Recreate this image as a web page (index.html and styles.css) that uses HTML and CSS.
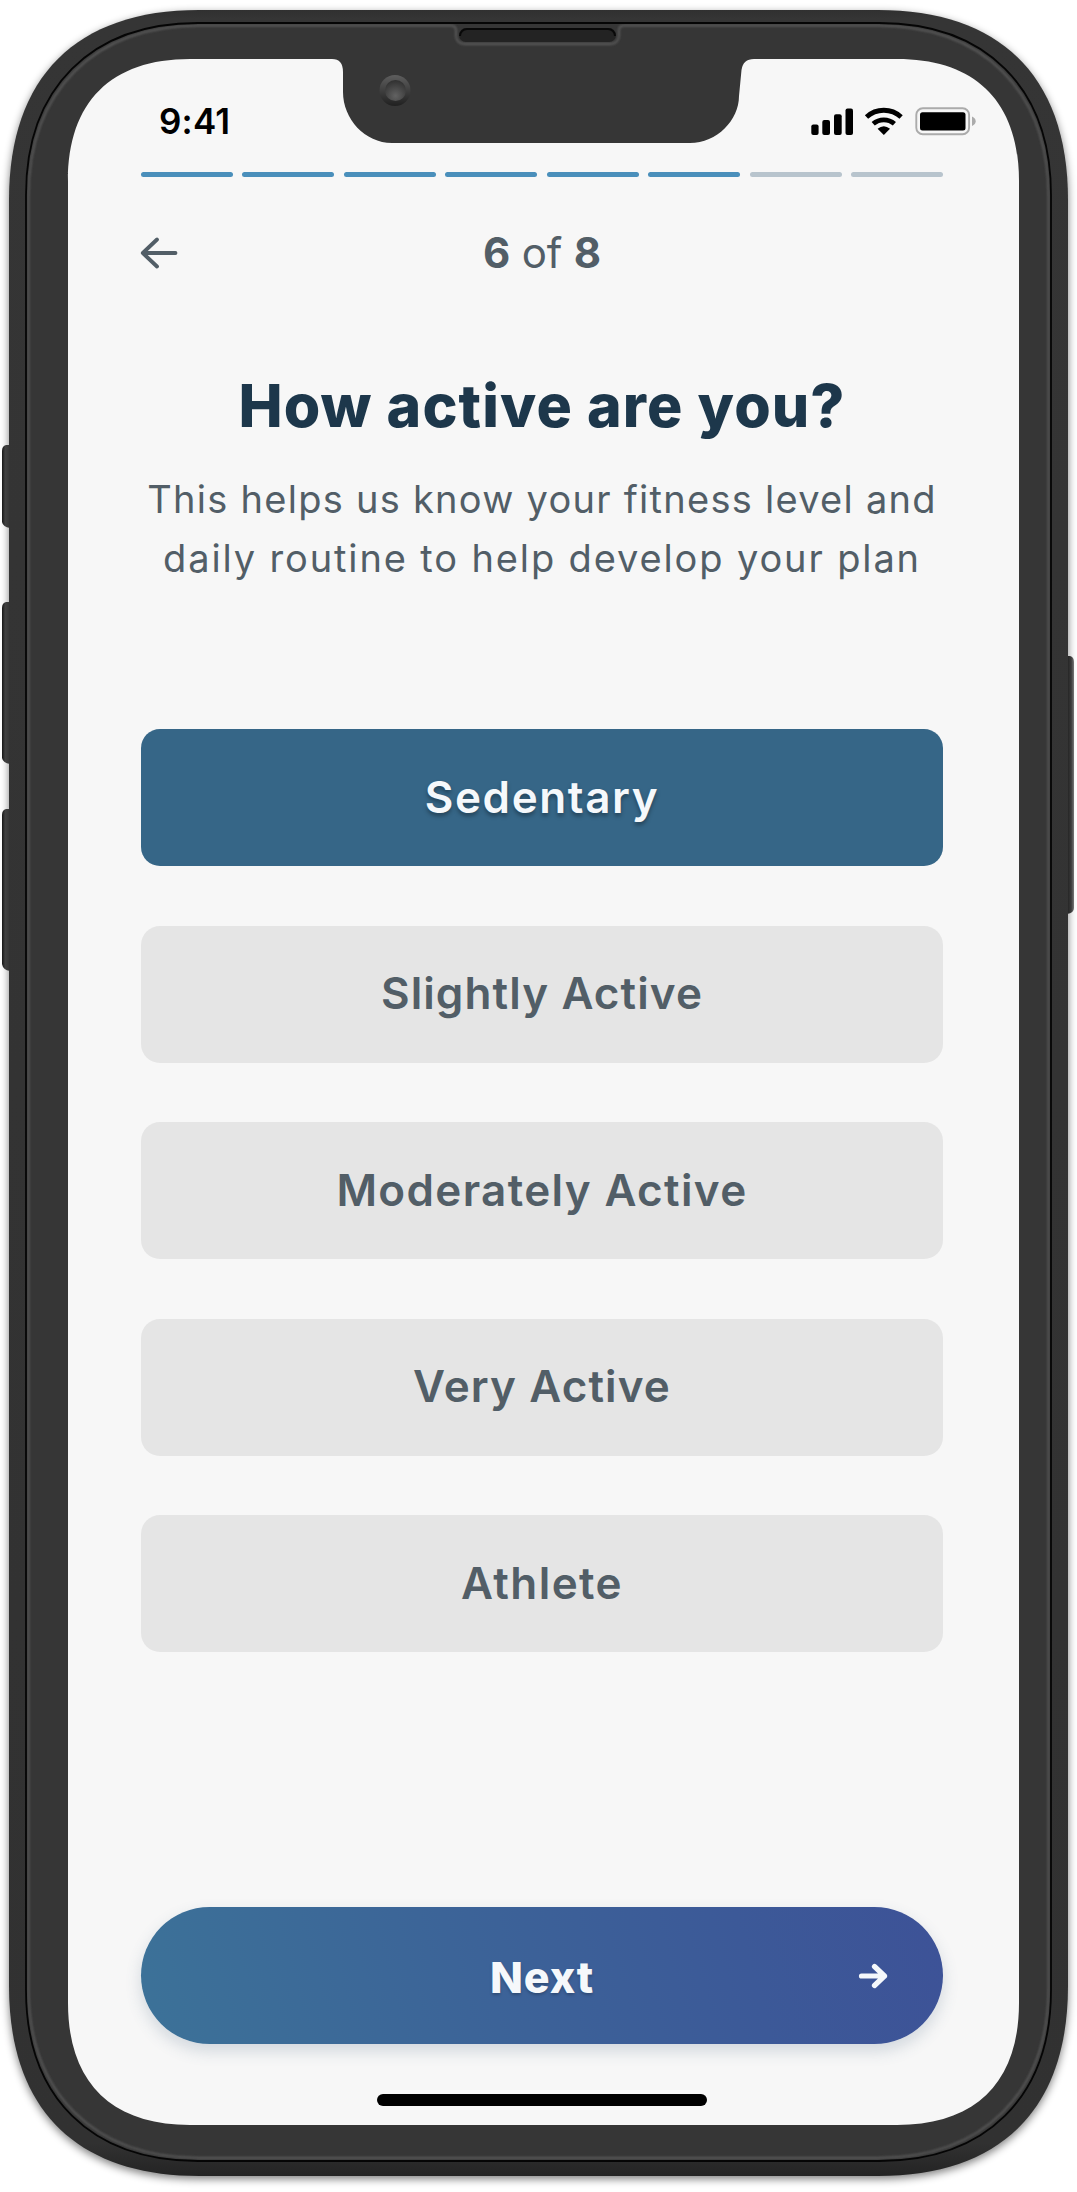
FILE: index.html
```html
<!DOCTYPE html>
<html lang="en">
<head>
<meta charset="utf-8">
<title>How active are you?</title>
<link rel="stylesheet" href="styles.css">
</head>
<body>
<div class="device">
  <svg class="frame" viewBox="0 0 1077 2192" width="1077" height="2192" aria-hidden="true">
    <defs>
      <linearGradient id="rim" x1="0" y1="0" x2="0" y2="1">
        <stop offset="0" stop-color="#303030"/><stop offset=".004" stop-color="#353535"/>
        <stop offset=".985" stop-color="#313131"/><stop offset="1" stop-color="#242424"/>
      </linearGradient>
      <linearGradient id="keyLeft"><stop offset="0" stop-color="#161616"/><stop offset=".4" stop-color="#414141"/><stop offset="1" stop-color="#343434"/></linearGradient>
      <linearGradient id="keyRight"><stop offset="0" stop-color="#1f1f1f"/><stop offset=".6" stop-color="#3b3b3b"/><stop offset="1" stop-color="#777"/></linearGradient>
      <linearGradient id="lensRing" x1="0" y1="0" x2="0" y2="1"><stop offset="0" stop-color="#5e5e5e"/><stop offset="1" stop-color="#202020"/></linearGradient>
      <radialGradient id="lens" cx=".5" cy=".75" r=".75"><stop offset="0" stop-color="#626262"/><stop offset="1" stop-color="#303030"/></radialGradient>
      <filter id="shade" x="-5%" y="-5%" width="110%" height="110%"><feGaussianBlur stdDeviation="4"/></filter>
      <filter id="soft"><feGaussianBlur stdDeviation=".9"/></filter>
      <path id="body" d="M199 10H878C1001 10 1068 77 1068 200V1986C1068 2109 1001 2176 878 2176H199C76 2176 9 2109 9 1986V200C9 77 76 10 199 10Z"/>
      <path id="ring" d="M198 23H879C986 23 1051 88 1051 195V1990C1051 2097 986 2161 879 2161H198C91 2161 26 2097 26 1990V195C26 88 91 23 198 23Z"/>
    </defs>
    <use href="#body" fill="#000" opacity=".5" transform="translate(0 3)" filter="url(#shade)"/>
    <g fill="url(#keyLeft)">
      <path d="M10 445H6Q2 446 2 451V522Q3 527 10 528Z"/>
      <path d="M10 602H6Q2 603 2 608V758Q3 763 10 764Z"/>
      <path d="M10 809H6Q2 810 2 815V964Q3 970 10 971Z"/>
    </g>
    <path d="M1067 656H1070Q1074 657 1074 662V908Q1074 913 1067 914Z" fill="url(#keyRight)"/>
    <use href="#body" fill="url(#rim)"/>
    <use href="#ring" fill="#363636"/>
    <path d="M200 25.500H451Q456 25.500 456 31V35Q456 44 465 44H610Q619 44 619 35V31Q619 25.500 624 25.500H877C983 25.500 1048.500 91 1048.500 197V1988C1048.500 2093 983 2158 877 2158H200C94 2158 28.500 2093 28.500 1988V197C28.500 91 94 25.500 200 25.500Z" fill="none" stroke="#5c5c5c" stroke-width="1.800" filter="url(#soft)"/>
    <use href="#ring" fill="none" stroke="#050505" stroke-width="1.800"/>
    <rect x="459" y="28" width="157" height="14" rx="7" fill="#232323"/>
    <path d="M460 36A7 7 0 0 1 467 29H608A7 7 0 0 1 615 36" fill="none" stroke="#080808" stroke-width="2"/>
    <circle cx="395" cy="90.500" r="15.500" fill="url(#lensRing)"/>
    <circle cx="395.500" cy="90.500" r="10.500" fill="url(#lens)"/>
    <path d="M190 59H332Q343 59 343 72V92C343 119 365 143 392 143H690C717 143 739 120 739 96L741.500 70Q743 59 754 59H897C976 59 1019 102 1019 181V2003C1019 2082 976 2125 897 2125H190C111 2125 68 2082 68 2003V181C68 102 111 59 190 59Z" fill="#f7f7f7"/>
  </svg>

  <main class="screen">
    <div class="status">
      <span class="clock">9:41</span>
      <svg class="status-icons" viewBox="0 0 166 30" width="166" height="30" aria-hidden="true">
        <rect x="1.300" y="18.500" width="7.300" height="10.500" rx="2"/>
        <rect x="12.300" y="14" width="7.700" height="15" rx="2"/>
        <rect x="24" y="8.200" width="7.700" height="20.800" rx="2"/>
        <rect x="35.500" y="2.500" width="7.500" height="26.500" rx="2"/>
        <g fill="none" stroke="#000" stroke-width="4.800">
          <path d="M56.500 11A25.500 25.500 0 0 1 91.100 11"/>
          <path d="M63.200 17.800A16.200 16.200 0 0 1 84.400 17.800"/>
        </g>
        <path d="M73.800 29L67.600 22.800Q73.800 17.800 80 22.800Z"/>
        <rect x="106.300" y="2.300" width="52.800" height="25.900" rx="6.500" fill="none" stroke="#ababab" stroke-width="1.900"/>
        <rect x="110" y="6.200" width="45.500" height="18.300" rx="2.500"/>
        <path d="M162 10.500Q165.700 12.200 165.700 15.200T162 20Z" fill="#ababab"/>
      </svg>
    </div>

    <div class="content">
      <div class="progress">
        <i class="step done"></i><i class="step done"></i><i class="step done"></i><i class="step done"></i>
        <i class="step done"></i><i class="step done"></i><i class="step"></i><i class="step"></i>
      </div>
      <header class="nav">
        <svg class="back" viewBox="0 0 38 34" width="38" height="34" aria-label="Back"><path d="M34.500 17H1.800M16 3.500L1.800 17L16 30.500"/></svg>
        <span class="count"><b>6</b> of <b>8</b></span>
      </header>
      <h1 class="title">How active are you?</h1>
      <p class="lead"><span class="line first">This helps us know your fitness level and</span><span class="line second">daily routine to help develop your plan</span></p>
      <div class="options">
        <button class="option selected">Sedentary</button>
        <button class="option">Slightly Active</button>
        <button class="option moderate">Moderately Active</button>
        <button class="option">Very Active</button>
        <button class="option athlete">Athlete</button>
      </div>
      <button class="next">
        <span class="next-label">Next</span>
        <svg class="next-arrow" viewBox="0 0 30 26" width="30" height="26" aria-hidden="true"><path d="M3.500 13H26.500M16.500 3.500L26.500 13L16.500 22.500"/></svg>
      </button>
      <div class="home"></div>
    </div>
  </main>
</div>
</body>
</html>
```
FILE: styles.css
```css
* { box-sizing: border-box; }
body { margin: 0; background: #fff; font-family: Inter, "Open Sans", sans-serif; }
button { border: 0; padding: 0; font-family: inherit; }

.device { position: relative; width: 1077px; height: 2192px; padding: 59px 58px 67px 68px; overflow: hidden; }
.frame { position: absolute; left: 0; top: 0; }
.screen { position: relative; display: flex; flex-direction: column; height: 2066px; }

.status { display: flex; justify-content: space-between; align-items: center; height: 113px; padding: 11px 43px 0 91px; }
.clock { font-size: 35px; font-weight: 600; line-height: 40px; letter-spacing: .2px; }

.content { display: flex; flex-direction: column; width: 802px; margin-left: 73px; }
.progress { display: flex; gap: 9.5px; height: 5px; }
.step { flex: 1; border-radius: 2.5px; background: #b8c4cd; }
.step.done { background: #4a8fbb; }

.nav { display: grid; grid-template-columns: 38px 1fr 38px; align-items: center; height: 60px; margin-top: 46px; }
.back { fill: none; stroke: #525e67; stroke-width: 3.8; stroke-linecap: round; stroke-linejoin: round; overflow: visible; }
.count { font-size: 42px; line-height: 60px; text-align: center; color: #525e67; letter-spacing: -.2px; }
.count b { font-weight: 700; }

.title { margin: 83px 0 0; font-size: 59px; font-weight: 800; line-height: 80px; letter-spacing: 1.1px; text-align: center; color: #1d374b; white-space: nowrap; }
.lead { display: flex; flex-direction: column; align-items: center; margin: 24px 0 0; font-size: 38px; line-height: 59px; color: #525e67; white-space: nowrap; }
.first { letter-spacing: 1.27px; }
.second { letter-spacing: 1.87px; }

.options { display: flex; flex-direction: column; gap: 59.5px; margin-top: 141px; }
.option { height: 137px; padding-bottom: 2px; border-radius: 19px; background: #e5e5e5; color: #525e67; font-size: 44px; font-weight: 600; letter-spacing: 1.1px; }
.option.moderate { letter-spacing: 1.35px; }
.option.athlete { letter-spacing: 1.4px; }
.option.selected { background: #366687; color: #f5f8fb; letter-spacing: 1.6px; text-shadow: 0 3px 4px rgba(0, 0, 0, .35); }

.next { display: grid; grid-template-columns: 1fr auto 1fr; align-items: center; height: 137px; margin-top: 255px; border-radius: 68.5px; background: linear-gradient(75deg, #3c7298, #3c6498 40%, #3c5998 75%, #3d5297); box-shadow: 0 7px 16px rgba(60, 90, 120, .2); }
.next-label { grid-column: 2; padding-top: 3px; font-size: 43px; font-weight: 800; letter-spacing: .9px; color: #f5f8fb; text-shadow: 0 2px 3px rgba(0, 0, 0, .22); }
.next-arrow { justify-self: end; margin-right: 55px; fill: none; stroke: #f5f8fb; stroke-width: 5.2; stroke-linecap: round; stroke-linejoin: round; }
.home { width: 330px; height: 12px; margin: 50px auto 0; border-radius: 6px; background: #000; }
```
